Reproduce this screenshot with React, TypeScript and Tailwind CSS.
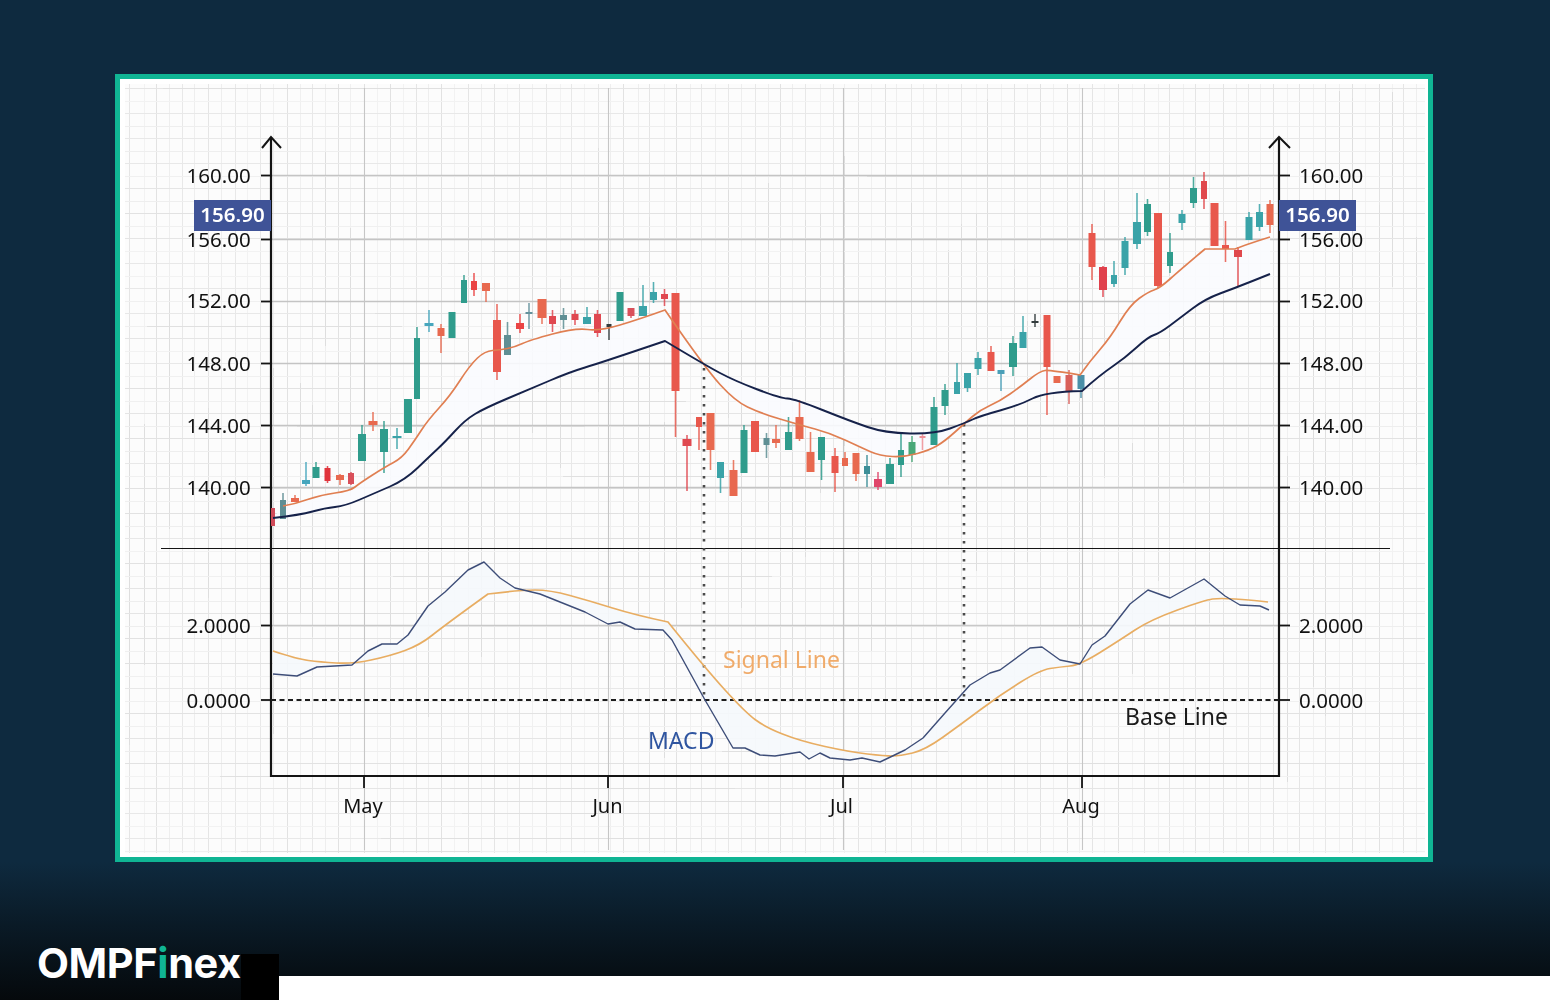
type Candle = [x: number, wickTop: number, wickBottom: number, bodyTop: number, bodyBottom: number, tone: string, width: number];

const G = '#2f9c8c';
const T = '#3aa3a8';
const B = '#46a6bd';
const S = '#5f8f94';
const R = '#e8574c';
const O = '#e8694f';
const P = '#ef8f96';
const D = '#333b3d';

// x, wick top, wick bottom, body top, body bottom, colour, body width
const CANDLES: Candle[] = [
  [273, 508, 526, 508, 526, '#cf4a58', 4],
  [283, 493, 519, 500, 519, S, 6],
  [295, 495, 502, 498, 502, O, 8],
  [306, 462, 486, 480, 484, B, 8],
  [316, 462, 478, 467, 478, G, 7],
  [327.5, 466, 483, 468, 481, '#e0343c', 6],
  [340, 474, 485, 475, 480, O, 8],
  [351, 472, 485, 473, 484, '#d9505a', 6],
  [362, 425, 461, 434, 461, G, 8],
  [373, 412, 431, 421, 425, O, 9],
  [384, 421, 473, 429, 452, G, 8],
  [397, 428, 449, 436, 438, T, 9],
  [408, 399, 433, 399, 433, G, 8],
  [417, 327, 399, 338, 399, G, 6],
  [429, 310, 332, 323, 326, B, 9],
  [441, 324, 353, 328, 336, O, 7],
  [452, 312, 338, 312, 338, G, 7],
  [464, 275, 303, 280, 303, G, 6],
  [474, 273, 296, 281, 290, '#ea4444', 6],
  [486, 283, 302, 283, 291, O, 8],
  [497, 304, 380, 320, 372, R, 8],
  [507.5, 322, 355, 335, 355, S, 7],
  [520, 314, 333, 323, 329, '#ea4444', 8],
  [529, 303, 329, 312, 314, '#64929c', 7],
  [542, 299, 324, 299, 318, O, 9],
  [552.5, 310, 332, 316, 324, '#e04850', 7],
  [563.5, 308, 329, 315, 320, S, 7],
  [575, 310, 325, 314, 320, '#e04850', 7],
  [587, 307, 324, 317, 324, T, 8],
  [597.5, 310, 337, 314, 333, '#e04850', 7],
  [609, 324, 340, 324, 327, D, 5],
  [620, 292, 321, 292, 321, G, 7],
  [631, 308, 318, 308, 316, '#d9505a', 7],
  [643, 285, 316, 306, 316, T, 8],
  [653.5, 282, 303, 292, 300, T, 7],
  [664.5, 289, 306, 294, 299, '#e04850', 7],
  [675.5, 293, 437, 293, 391, R, 8],
  [687, 435, 491, 439, 446, '#e04850', 9],
  [699, 417, 450, 417, 427, R, 6],
  [710.5, 413, 470, 413, 450, O, 8],
  [720.5, 462, 493, 462, 478, T, 7],
  [733.5, 460, 496, 470, 496, O, 8],
  [744, 425, 473, 430, 473, G, 7],
  [755, 421, 452, 421, 452, R, 8],
  [766.5, 433, 458, 438, 445, S, 6],
  [776, 425, 448, 439, 443, O, 8],
  [788.5, 417, 450, 432, 450, G, 7],
  [799.5, 400, 441, 417, 439, O, 8],
  [810.5, 432, 472, 452, 472, O, 8],
  [821.5, 437, 480, 437, 460, G, 7],
  [835, 448, 492, 456, 473, R, 7],
  [845, 452, 466, 458, 466, O, 6],
  [856, 453, 481, 453, 474, O, 7],
  [867, 455, 487, 466, 474, '#3d8f98', 6],
  [878, 472, 490, 479, 487, '#e0456a', 8],
  [890, 458, 484, 464, 484, G, 8],
  [901, 434, 477, 450, 465, G, 6],
  [912, 436, 462, 442, 455, '#49a878', 7],
  [922.5, 434, 450, 436, 438, P, 6],
  [934, 397, 445, 407, 445, G, 7],
  [945, 384, 415, 390, 406, G, 7],
  [957, 363, 394, 382, 394, T, 6],
  [967.5, 373, 392, 373, 388, T, 7],
  [978, 352, 375, 358, 369, T, 7],
  [991, 346, 371, 352, 371, R, 7],
  [1001, 370, 391, 370, 374, '#4a9fb8', 7],
  [1013, 336, 376, 343, 367, G, 8],
  [1023, 316, 348, 332, 348, T, 7],
  [1035, 314, 327, 321, 323, D, 7],
  [1047, 315, 415, 315, 367, R, 7],
  [1057, 376, 383, 376, 383, O, 7],
  [1069, 370, 404, 375, 391, '#d9605a', 7],
  [1081, 375, 398, 375, 389, '#4a8fa8', 7],
  [1092, 224, 280, 233, 267, R, 7],
  [1103, 266, 297, 267, 290, '#e0404c', 8],
  [1114, 261, 287, 275, 284, T, 6],
  [1125, 237, 275, 241, 268, T, 7],
  [1137, 193, 249, 222, 244, T, 8],
  [1147.5, 199, 236, 204, 232, G, 7],
  [1158, 213, 288, 213, 286, R, 8],
  [1170, 233, 273, 252, 266, G, 6],
  [1182, 210, 230, 214, 223, T, 7],
  [1193.5, 177, 208, 188, 203, G, 7],
  [1204, 172, 209, 181, 199, '#e0484c', 6],
  [1214.5, 203, 246, 203, 246, R, 8],
  [1225.5, 221, 262, 245, 249, R, 7],
  [1238, 247, 286, 250, 257, '#e0484c', 8],
  [1249, 212, 240, 217, 240, T, 7],
  [1259.5, 204, 231, 212, 227, T, 7],
  [1270, 200, 233, 204, 225, O, 7],
];

// a third value marks a sharp corner
const FAST: number[][] = [[283, 506], [295, 504], [320, 495], [350, 491], [360, 483], [385, 467], [402, 458], [415, 440], [428, 420], [450, 396], [470, 365], [485, 351], [500, 350], [515, 347], [530, 340], [575, 328], [600, 331], [640, 319], [665, 310, 1], [705, 368], [735, 401], [760, 413], [800, 425], [830, 433], [860, 447], [880, 456], [905, 457], [930, 450], [945, 441], [965, 423], [980, 410], [1000, 401], [1020, 387], [1040, 371], [1050, 370], [1080, 375, 1], [1090, 361], [1110, 338], [1130, 305], [1148, 292], [1160, 288], [1180, 270], [1205, 249, 1], [1235, 249, 1], [1245, 245], [1270, 237]];
const SLOW: number[][] = [[273, 518], [300, 515], [325, 508], [345, 506], [375, 493], [405, 480], [430, 456], [445, 442], [465, 420], [485, 408], [530, 389], [570, 372], [600, 363], [665, 341, 1], [705, 365], [735, 381], [780, 398], [795, 399], [850, 421], [885, 433], [935, 434], [965, 423], [980, 416], [1020, 405], [1045, 392], [1082, 391, 1], [1100, 375], [1125, 358], [1148, 337], [1160, 333], [1180, 318], [1205, 299], [1235, 288], [1270, 274]];
const MACD: number[][] = [[273, 674], [297, 676], [317, 667], [352, 665], [368, 651], [382, 644], [397, 644], [408, 635], [428, 606], [445, 592], [468, 570], [484, 562], [500, 578], [515, 588], [540, 594], [585, 612], [608, 624], [620, 622], [635, 629], [663, 630], [672, 640], [705, 700], [733, 748], [745, 748], [760, 755], [775, 756], [800, 752], [809, 759], [820, 753], [830, 758], [850, 760], [862, 758], [880, 762], [905, 750], [923, 738], [945, 713], [970, 685], [990, 673], [1000, 670], [1030, 648], [1042, 647], [1060, 660], [1080, 664], [1092, 645], [1105, 636], [1130, 604], [1148, 590], [1170, 598], [1204, 579], [1225, 596], [1240, 605], [1260, 606], [1269, 610]];
const SIGNAL: number[][] = [[273, 651], [297, 659], [320, 662], [352, 664], [390, 656], [420, 645], [445, 625], [488, 594, 1], [520, 590], [550, 590], [590, 601], [635, 615], [668, 622, 1], [705, 668], [745, 712], [765, 727], [800, 741], [850, 752], [885, 756], [900, 756], [925, 750], [960, 725], [1000, 695], [1040, 670], [1060, 667], [1080, 665], [1120, 640], [1150, 620], [1205, 600], [1220, 598], [1250, 600], [1268, 602]];

const PRICE_TICKS: [number, number, string][] = [[175.5, 183, '160.00'], [239.5, 247, '156.00'], [301.5, 308, '152.00'], [363.5, 371, '148.00'], [425.5, 433, '144.00'], [487.5, 495, '140.00']];
const MACD_TICKS: [number, number, string][] = [[625.5, 633, '2.0000'], [700, 708, '0.0000']];
const MONTHS: [number, number, string][] = [[364, 363, 'May'], [608, 607.5, 'Jun'], [843, 841.5, 'Jul'], [1082, 1081, 'Aug']];

function toPoints(pts: number[][]) {
  return pts.map((p) => `${p[0]},${p[1]}`).join(' ');
}

// rounds the joints through segment midpoints, corners stay sharp
function smooth(pts: number[][]) {
  let d = `M${pts[0][0]} ${pts[0][1]}`;
  for (let i = 1; i < pts.length - 1; i++) {
    if (pts[i][2]) {
      d += ` L${pts[i][0]} ${pts[i][1]}`;
      continue;
    }
    const next = pts[i + 1];
    const mx = next[2] ? next[0] : (pts[i][0] + next[0]) / 2;
    const my = next[2] ? next[1] : (pts[i][1] + next[1]) / 2;
    d += ` Q${pts[i][0]} ${pts[i][1]} ${mx} ${my}`;
  }
  const last = pts[pts.length - 1];
  return `${d} L${last[0]} ${last[1]}`;
}

function band(top: number[][], bottom: number[][]) {
  return toPoints([...top, ...[...bottom].reverse()]);
}

type Line = { d: string; color: string };

// graph paper: steady 13px rhythm, slight jitter, a few darker stretches
function buildGrid() {
  let seed = 41;
  const rnd = () => {
    seed = (seed * 16807) % 2147483647;
    return seed / 2147483647;
  };
  const lines: Line[] = [];
  const strong = ['#e2e2e2', '#e5e5e5', '#e8e8e8'];
  const soft = ['#eeeeee', '#f0f0f0', '#f2f2f2'];
  const pick = (list: string[]) => list[Math.floor(rnd() * list.length)];

  let n = 0;
  for (let x = 130; x < 1425; x += 13, n++) {
    const at = x + Math.round(rnd() * 2 - 1) + 0.5;
    lines.push({ d: `M${at} 84V853`, color: pick(n % 2 ? soft : strong) });
    if (rnd() > 0.55) {
      const from = 84 + Math.floor(rnd() * 400);
      lines.push({ d: `M${at} ${from}V${from + 180 + Math.floor(rnd() * 190)}`, color: '#dedede' });
    }
  }
  n = 0;
  for (let y = 88; y < 853; y += 12.5, n++) {
    const at = Math.round(y) + 0.5;
    lines.push({ d: `M125 ${at}H1425`, color: pick(n % 2 ? soft : strong) });
    if (rnd() > 0.6) {
      const from = 125 + Math.floor(rnd() * 800);
      lines.push({ d: `M${from} ${at}H${from + 200 + Math.floor(rnd() * 300)}`, color: '#e0e0e0' });
    }
  }
  return lines;
}

const GRID = buildGrid();

function CandleMark({ c }: { c: Candle }) {
  const [x, wickTop, wickBottom, bodyTop, bodyBottom, tone, width] = c;
  return (
    <g>
      <line x1={x} x2={x} y1={wickTop} y2={wickBottom} stroke={tone} strokeWidth={1.6} opacity={0.85} />
      <rect x={x - width / 2} y={bodyTop} width={width} height={bodyBottom - bodyTop} fill={tone} />
    </g>
  );
}

function PriceTag({ x }: { x: number }) {
  return (
    <g>
      <rect x={x} y={200} width={77} height={31} fill="#3f5397" />
      <text x={x + 38.5} y={222} textAnchor="middle" fontSize={20.5} fontWeight={600} fill="#ffffff">
        156.90
      </text>
    </g>
  );
}

function Chart() {
  return (
    <svg viewBox="120 79 1308 778" className="block h-full w-full font-['Noto_Sans',sans-serif] blur-[0.35px]">
      <rect x={120} y={79} width={1308} height={778} fill="#ffffff" />
      <rect x={125} y={84} width={1300} height={769} fill="#fcfcfc" />
      {GRID.map((l, i) => (
        <path key={i} d={l.d} stroke={l.color} strokeWidth={1} fill="none" />
      ))}

      {/* major grid */}
      {PRICE_TICKS.map(([y]) => (
        <line key={y} x1={271} x2={1279} y1={y} y2={y} stroke="#c4c4c4" strokeWidth={1.3} />
      ))}
      <line x1={271} x2={1279} y1={625.5} y2={625.5} stroke="#c8c8c8" strokeWidth={1.3} />
      {MONTHS.map(([x]) => (
        <line key={x} x1={x + 0.5} x2={x + 0.5} y1={88} y2={850} stroke="#c6c6c6" strokeWidth={1.1} />
      ))}

      {/* pale wash between the curves */}
      <polygon points={band(FAST, SLOW)} fill="#fafbfe" opacity={0.9} />
      <polygon points={band(MACD, SIGNAL)} fill="#f5f8fc" opacity={0.9} />

      {/* axes */}
      <g stroke="#141414" fill="none">
        <path d="M271 137V776H1279V137" strokeWidth={2.2} />
        <path d="M262 148L271 137L281 148" strokeWidth={2} />
        <path d="M1269 148L1279 137L1290 148" strokeWidth={2} />
        <line x1={161} x2={1390} y1={548.5} y2={548.5} strokeWidth={1.1} />
        {[...PRICE_TICKS, ...MACD_TICKS].map(([y]) => (
          <g key={y} strokeWidth={1.8}>
            <line x1={261} x2={271} y1={y} y2={y} />
            <line x1={1279} x2={1290} y1={y} y2={y} />
          </g>
        ))}
        {MONTHS.map(([x]) => (
          <line key={x} x1={x} x2={x} y1={776} y2={788} strokeWidth={1.8} />
        ))}
      </g>

      {/* guides */}
      <line x1={271} x2={1279} y1={700} y2={700} stroke="#1c1c1c" strokeWidth={2} strokeDasharray="5 3.5" />
      <line x1={704} x2={704} y1={368} y2={697} stroke="#4a4a4a" strokeWidth={2.6} strokeDasharray="2.4 6.6" />
      <line x1={964} x2={964} y1={424} y2={697} stroke="#4a4a4a" strokeWidth={2.6} strokeDasharray="2.4 6.6" />

      {CANDLES.map((c) => (
        <CandleMark key={c[0]} c={c} />
      ))}

      <path d={smooth(FAST)} fill="none" stroke="#e07f52" strokeWidth={1.7} />
      <path d={smooth(SLOW)} fill="none" stroke="#16224a" strokeWidth={1.9} />
      <path d={smooth(SIGNAL)} fill="none" stroke="#e8ad62" strokeWidth={1.7} />
      <polyline points={toPoints(MACD)} fill="none" stroke="#3d4d78" strokeWidth={1.4} strokeLinejoin="round" />

      {/* labels */}
      <g fontSize={20.5} fill="#111111">
        {[...PRICE_TICKS, ...MACD_TICKS].map(([y, base, label]) => (
          <g key={y}>
            <text x={186.5} y={base}>{label}</text>
            <text x={1299} y={base}>{label}</text>
          </g>
        ))}
        {MONTHS.map(([x, center, label]) => (
          <text key={x} x={center} y={813} textAnchor="middle" fontSize={20}>{label}</text>
        ))}
      </g>
      <PriceTag x={194} />
      <PriceTag x={1279} />
      <text x={1125} y={725} fontSize={23} fill="#1a1a1a">Base Line</text>
      <text x={648} y={749} fontSize={23} fill="#2f55a0">MACD</text>
      <text x={723} y={668} fontSize={23} fill="#f0ab6a">Signal Line</text>
    </svg>
  );
}

export default function App() {
  return (
    <div className="flex h-[1000px] w-[1550px] flex-col overflow-hidden bg-[#0e2a3f] pt-[74px]">
      <div className="ml-[115px] h-[788px] w-[1318px] border-[5px] border-[#10b594] bg-white">
        <Chart />
      </div>
      <footer className="flex flex-1 items-end bg-linear-to-b from-[#0e2a3f] to-[#05090c]">
        <div className="w-[241px] pb-[13px] pl-[37px] font-['Inter',sans-serif] text-[41.5px] leading-[48px] font-bold tracking-[-0.4px] text-white">
          OMPF<span className="text-[#10b594]">i</span>nex
        </div>
        <div className="h-[46px] w-[38px] bg-black" />
        <div className="h-[24px] flex-1 bg-white" />
      </footer>
    </div>
  );
}
